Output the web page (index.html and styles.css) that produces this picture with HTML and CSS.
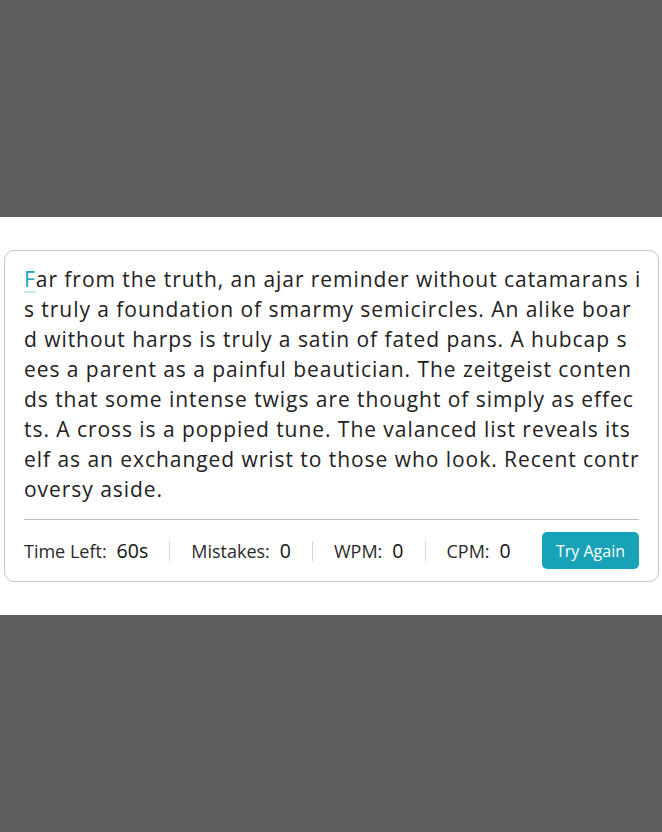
FILE: index.html
```
<!DOCTYPE html>
<html lang="en">
<head>
<meta charset="utf-8">
<title>Typing Speed Test</title>
<link rel="stylesheet" href="styles.css">
</head>
<body>
<div class="wrapper">
  <div class="content-box">
    <div class="typing-text">
      <p><span class="active">F</span>ar from the truth, an ajar reminder without catamarans i<br>s truly a foundation of smarmy semicircles. An alike boar<br>d without harps is truly a satin of fated pans. A hubcap s<br>ees a parent as a painful beautician. The zeitgeist conten<br>ds that some intense twigs are thought of simply as effec<br>ts. A cross is a poppied tune. The valanced list reveals its<br>elf as an exchanged wrist to those who look. Recent contr<br>oversy aside.</p>
    </div>
    <div class="content">
      <ul class="result-details">
        <li class="time"><p>Time Left:</p><span><b>60</b>s</span></li>
        <li class="mistake"><p>Mistakes:</p><span>0</span></li>
        <li class="wpm"><p>WPM:</p><span>0</span></li>
        <li class="cpm"><p>CPM:</p><span>0</span></li>
      </ul>
      <button class="retry">Try Again</button>
    </div>
  </div>
</div>
</body>
</html>
```

FILE: styles.css
```
* {
  box-sizing: border-box;
}

body {
  margin: 0;
  min-height: 100vh;
  display: flex;
  align-items: center;
  justify-content: center;
  background: #5f5f5f;
  font-family: "Open Sans", "Liberation Sans", sans-serif;
  color: #222;
}

.wrapper {
  width: 100%;
  background: #fff;
  padding: 33px 3px 33px 4px;
}

.content-box {
  border: 1px solid #c4c4c4;
  border-radius: 10px;
  padding: 13px 19px 0;
}

.typing-text p {
  margin: 0;
  font-size: 21px;
  line-height: 30px;
  letter-spacing: 0.95px;
  white-space: nowrap;
}

.typing-text .active {
  position: relative;
  color: #17a2b8;
}

.typing-text .active::before {
  content: "";
  position: absolute;
  left: 0;
  bottom: 0;
  width: 100%;
  height: 2px;
  border-radius: 5px;
  background: #17a2b8;
  opacity: 0.25;
}

.content {
  margin-top: 15px;
  border-top: 1px solid #bfbfbf;
  padding: 12px 0;
  display: flex;
  align-items: center;
}

.result-details {
  margin: 0;
  padding: 0;
  list-style: none;
  display: flex;
  align-items: center;
}

.result-details li {
  display: flex;
  align-items: center;
  height: 20px;
}

.result-details li + li {
  margin-left: 21px;
  padding-left: 21px;
  border-left: 1px solid #d6d6d6;
}

.result-details p {
  margin: 0;
  font-size: 18px;
  color: #2a2a2a;
}

.result-details span {
  margin-left: 10px;
  font-size: 19.5px;
  font-weight: 500;
  color: #111;
}

.result-details b {
  font-weight: 500;
}

.retry {
  margin-left: auto;
  width: 97px;
  height: 37px;
  border: none;
  border-radius: 5px;
  background: #17a2b8;
  color: #fff;
  font-family: inherit;
  font-size: 16px;
  padding: 0;
}
```
